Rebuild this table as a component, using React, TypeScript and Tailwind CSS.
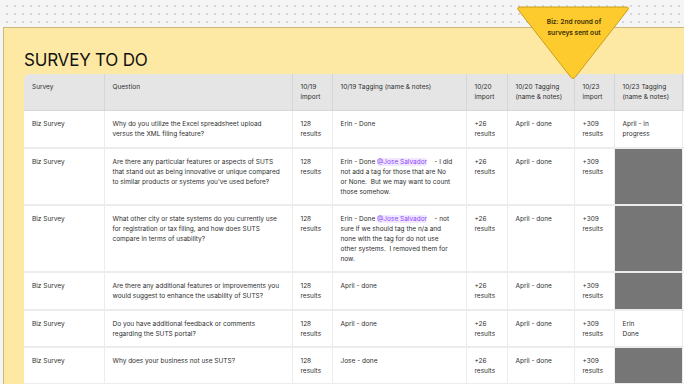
import type { ReactNode } from "react";

type Row = {
  h: number;
  q: string;
  t1: ReactNode;
  t2: string;
  t3: ReactNode | null;
  grayT1?: boolean;
};

function Mention({ name }: { name: string }) {
  return (
    <span className="rounded-[2px] bg-[#f1e8ff] text-[#8a3ffc]">@{name}</span>
  );
}

const rows: Row[] = [
  {
    h: 38,
    q: "Why do you utilize the Excel spreadsheet upload versus the XML filing feature?",
    t1: "Erin - Done",
    t2: "April - done",
    t3: "April - in progress",
  },
  {
    h: 57,
    q: "Are there any particular features or aspects of SUTS that stand out as being innovative or unique compared to similar products or systems you've used before?",
    t1: (
      <>
        Erin - Done <Mention name="Jose Salvador" />
        {"    - I did not add a tag for those that are No or None.  But we may want to count those somehow."}
      </>
    ),
    t2: "April - done",
    t3: null,
  },
  {
    h: 67,
    q: "What other city or state systems do you currently use for registration or tax filing, and how does SUTS compare in terms of usability?",
    t1: (
      <>
        Erin - Done <Mention name="Jose Salvador" />
        {"    - not sure if we should tag the n/a and none with the tag for do not use other systems.  I removed them for now."}
      </>
    ),
    t2: "April - done",
    t3: null,
  },
  {
    h: 38,
    q: "Are there any additional features or improvements you would suggest to enhance the usability of SUTS?",
    t1: "April - done",
    t2: "April - done",
    t3: null,
  },
  {
    h: 37,
    q: "Do you have additional feedback or comments regarding the SUTS portal?",
    t1: "April - done",
    t2: "April - done",
    t3: (
      <>
        Erin
        <br />
        Done
      </>
    ),
  },
  {
    h: 37,
    q: "Why does your business not use SUTS?",
    t1: "Jose - done",
    t2: "April - done",
    t3: null,
  },
  {
    h: 40,
    q: "",
    t1: "",
    t2: "",
    t3: null,
    grayT1: true,
  },
];

const cell = "border-r border-b-2 border-[#ececec] px-[8px] pt-[8px] align-top";

export default function App() {
  return (
    <div
      className="relative h-[384px] w-[684px] overflow-hidden bg-[#f5f5f5] bg-[radial-gradient(#d6d6d6_0.8px,transparent_0.9px)] bg-[size:8px_8px] bg-[position:3px_2px] text-[#2e2e2e] antialiased"
      style={{ fontFamily: "Inter, 'Noto Sans', sans-serif" }}
    >
      <div className="ml-[3px] mt-[27px] h-[400px] w-[820px] border-l border-t border-[#cbb87c] bg-[#fee9a4] pl-[20px] pt-[20px]">
        <h1 className="mb-[2px] text-[17px] leading-[24px] font-normal tracking-[-0.2px] text-[#111]">
          SURVEY TO DO
        </h1>
        <table className="w-[748px] table-fixed border-collapse overflow-hidden rounded-tl-[6px] text-[6.5px] leading-[10px]">
          <colgroup>
            <col className="w-[80px]" />
            <col className="w-[188px]" />
            <col className="w-[40px]" />
            <col className="w-[134px]" />
            <col className="w-[41px]" />
            <col className="w-[67px]" />
            <col className="w-[40px]" />
            <col className="w-[68px]" />
            <col className="w-[90px]" />
          </colgroup>
          <thead>
            <tr className="h-[36px] bg-[#e5e5e5] text-left">
              {[
                "Survey",
                "Question",
                "10/19 import",
                "10/19 Tagging (name & notes)",
                "10/20 import",
                "10/20 Tagging (name & notes)",
                "10/23 import",
                "10/23 Tagging (name & notes)",
                "",
              ].map((hd, i) => (
                <th
                  key={i}
                  className="border-r border-b border-[#d6d6d6] px-[8px] pt-[8px] align-top font-normal"
                >
                  {hd}
                </th>
              ))}
            </tr>
          </thead>
          <tbody className="bg-white">
            {rows.map((r, i) => (
              <tr key={i} style={{ height: r.h }}>
                <td className={cell}>{r.q ? "Biz Survey" : ""}</td>
                <td className={cell}>{r.q}</td>
                <td className={cell}>{r.q ? "128 results" : ""}</td>
                <td
                  className={
                    r.grayT1
                      ? "border-r border-[#ececec] border-t-2 border-t-[#6f6f6f] bg-white"
                      : cell + " whitespace-pre-wrap pr-[13px]"
                  }
                >
                  {r.t1}
                </td>
                <td className={cell}>{r.q ? "+26 results" : ""}</td>
                <td className={cell}>{r.t2}</td>
                <td className={cell}>{r.q ? "+309 results" : ""}</td>
                <td
                  className={
                    r.t3 === null
                      ? "border-r border-b-2 border-[#ececec] bg-[#767676]"
                      : cell
                  }
                >
                  {r.t3}
                </td>
                <td className={cell}></td>
              </tr>
            ))}
          </tbody>
        </table>
      </div>

      <svg
        className="absolute left-[513px] top-[3px]"
        width="122"
        height="82"
        viewBox="0 0 122 82"
      >
        <path
          d="M8 4 L113 4 Q117 4 114.5 7.2 L62.5 73.8 Q60 77 57.5 73.8 L5.5 7.2 Q3 4 8 4 Z"
          fill="#fecb2f"
          stroke="#c99f17"
          strokeWidth="1"
          strokeLinejoin="round"
        />
      </svg>
      <div className="absolute left-[513px] top-[17px] w-[122px] text-center text-[6.6px] leading-[11px] font-semibold text-[#3b3000]">
        Biz: 2nd round of
        <br />
        surveys sent out
      </div>
    </div>
  );
}
